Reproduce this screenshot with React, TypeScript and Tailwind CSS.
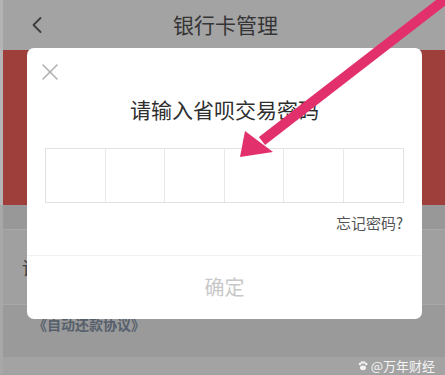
import { ChevronLeft, X } from "lucide-react";

const cjk = { fontFamily: '"Noto Sans CJK SC", "Noto Sans", sans-serif' };

const PinBoxes = () => (
  <div className="mx-[18px] mt-[25px] grid h-[55px] grid-cols-6 border border-[#e2e2e2]">
    {[0, 1, 2, 3, 4, 5].map((i) => (
      <div key={i} className={i < 5 ? "border-r border-[#e8e8e8]" : ""} />
    ))}
  </div>
);

const Arrow = () => (
  <svg
    className="pointer-events-none absolute left-0 top-0"
    width="445"
    height="375"
    viewBox="0 0 445 375"
  >
    <line
      x1="452"
      y1="-6"
      x2="262"
      y2="141"
      stroke="#e2306c"
      strokeWidth="10"
    />
    <polygon points="240,157 245,131 273,152" fill="#e2306c" />
  </svg>
);

const Paw = () => (
  <svg width="10" height="10" viewBox="0 0 10 10" className="mr-[3px]" fill="#f2f2f2">
    <circle cx="2" cy="3" r="1.3" />
    <circle cx="4" cy="1.5" r="1.3" />
    <circle cx="6.2" cy="1.5" r="1.3" />
    <circle cx="8.2" cy="3" r="1.3" />
    <ellipse cx="5" cy="6.8" rx="3" ry="2.4" />
  </svg>
);

export default function App() {
  return (
    <div
      className="relative h-[375px] w-[445px] overflow-hidden bg-[#a1a1a1]"
      style={cjk}
    >
      {/* page behind the dialog */}
      <div className="flex h-[50px] items-center border-l-[3px] border-[#b4b4b4] bg-[#a3a3a3]">
        <ChevronLeft className="ml-[20px] text-[#3d3d3d]" size={28} strokeWidth={1.6} />
        <div className="ml-[122px] text-[21px] text-[#353535]">银行卡管理</div>
      </div>
      <div className="h-[155px] border-l-[3px] border-[#b4b4b4] bg-[#9e3f3b]" />
      <div className="h-[25px] border-b border-l-[3px] border-[#a8a8a8] bg-[#989898]" />
      <div className="flex h-[75px] items-center border-b border-l-[3px] border-[#a8a8a8] bg-[#a0a0a0] pl-[19px] text-[18px] text-[#3a3a3a]">
        请
      </div>
      <div className="h-[52px] border-l-[3px] border-[#a8a8a8] bg-[#9a9a9a] pl-[30px] pt-[9px] text-[14px] font-bold text-[#56606c]">
        《自动还款协议》
      </div>
      <div className="flex h-[17px] items-center justify-end border-l-[3px] border-[#a8a8a8] bg-[#a3a3a3] pr-[10px] text-[13px] text-[#f4f4f4]">
        <Paw />@万年财经
      </div>

      {/* dialog */}
      <div className="absolute left-[27px] top-[48px] flex h-[271px] w-[395px] flex-col rounded-[7px] bg-white">
        <X className="ml-[9px] mt-[10px] text-[#b0b0b0]" size={28} strokeWidth={1.3} />
        <div className="mt-[9px] text-center text-[21px] leading-[28px] text-[#2e2e2e]">
          请输入省呗交易密码
        </div>
        <PinBoxes />
        <div className="mr-[19px] mt-[10px] text-right text-[15px] leading-[20px] text-[#555555]">
          忘记密码?
        </div>
        <div className="mt-[22px] flex flex-1 items-center justify-center border-t border-[#f2f2f2] pb-[2px] text-[20px] text-[#c8c8c8]">
          确定
        </div>
      </div>

      <Arrow />
    </div>
  );
}
